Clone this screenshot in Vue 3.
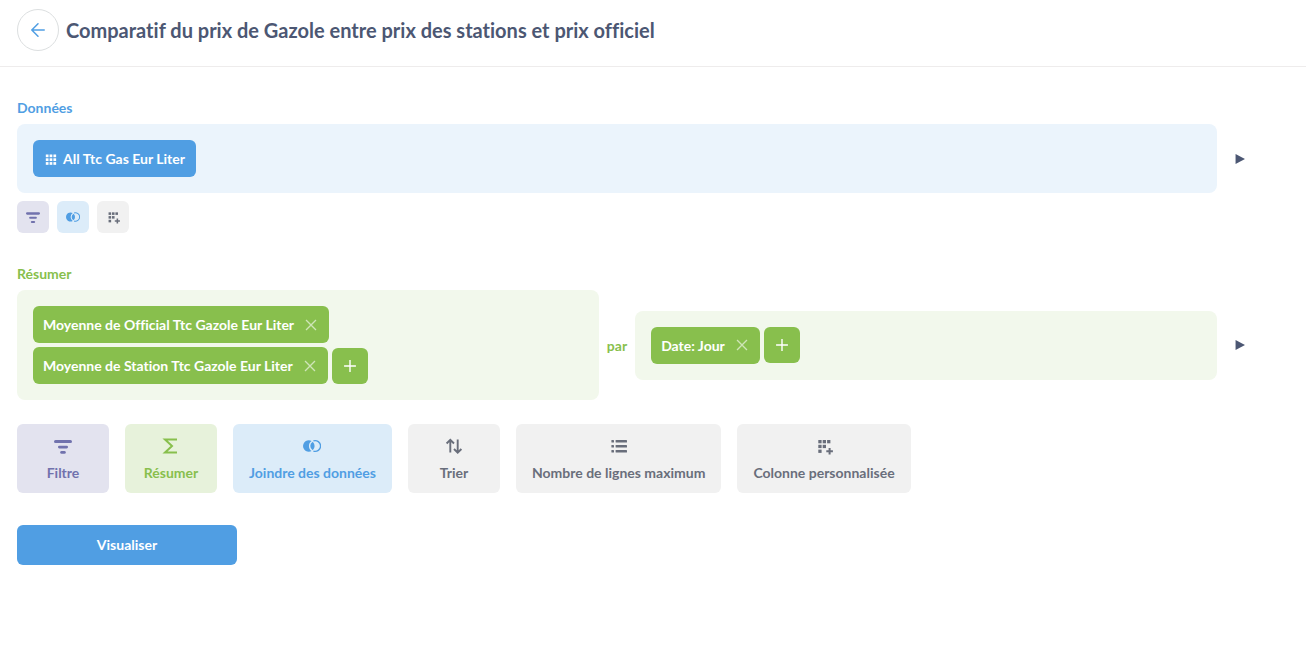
<script setup>
import { h } from 'vue'

const squares = [
  [0, 0], [1, 0], [2, 0],
  [0, 1], [1, 1], [2, 1],
  [0, 2], [1, 2], [2, 2]
]

const shapes = {
  back: () => [
    h('path', { d: 'M16 9H2M9 2L2 9l7 7', fill: 'none', stroke: 'currentColor', 'stroke-width': 1.7, 'stroke-linecap': 'round', 'stroke-linejoin': 'round' })
  ],
  table: () => squares.map(([x, y]) => h('rect', { x: 3.6 + x * 4.9, y: 3.2 + y * 4.9, width: 3.5, height: 3.5 })),
  filter: () => [
    h('rect', { x: 0, y: 3, width: 18, height: 3, rx: 1.5 }),
    h('rect', { x: 4, y: 8.7, width: 10, height: 2.7, rx: 1.3 }),
    h('rect', { x: 6.2, y: 14, width: 5.6, height: 2.8, rx: 1.4 })
  ],
  join: () => [
    h('path', { d: 'M8.600 3.900A5.800 5.800 0 1 0 8.600 14.100A6.200 6.200 0 0 1 8.600 3.900Z' }),
    h('path', { d: 'M9.750 4.750A5.800 5.800 0 0 1 9.750 13.250A4.900 4.900 0 0 1 9.750 4.750Z' }),
    h('path', { d: 'M10.400 3.900A5.400 5.400 0 1 1 10.400 14.100', fill: 'none', stroke: 'currentColor', 'stroke-width': 1.3 })
  ],
  custom: () => [
    ...squares.slice(0, 5).concat([[0, 2]]).map(([x, y]) => h('rect', { x: 3.3 + x * 4.4, y: 3 + y * 4.8, width: 3.3, height: 3.3 })),
    h('path', { d: 'M14.600 10.900v6.600M11.300 14.200h6.600', fill: 'none', stroke: 'currentColor', 'stroke-width': 2 })
  ],
  sum: () => [
    h('path', { d: 'M15 2.500H3l7 6.500-7 6.500h12', fill: 'none', stroke: 'currentColor', 'stroke-width': 2 })
  ],
  sort: () => [
    h('path', { d: 'M5.300 15.500V3M1.600 6.500l3.700-3.700L9 6.500M12.700 2.500v13M9 12l3.700 3.700 3.700-3.700', fill: 'none', stroke: 'currentColor', 'stroke-width': 1.9 })
  ],
  list: () => [3, 8, 13].flatMap((y) => [
    h('rect', { x: 1.4, y, width: 2.6, height: 2.6, rx: 0.6 }),
    h('rect', { x: 5.6, y, width: 11.4, height: 2.6, rx: 0.6 })
  ]),
  close: () => [
    h('path', { d: 'M3.400 3.400l11.200 11.200M14.600 3.400L3.400 14.600', fill: 'none', stroke: 'currentColor', 'stroke-width': 1.5 })
  ],
  plus: () => [
    h('path', { d: 'M9 1.400v15.200M1.400 9h15.200', fill: 'none', stroke: 'currentColor', 'stroke-width': 1.8 })
  ],
  play: () => [h('path', { d: 'M1 0l17 9-17 9z' })]
}

const Icon = ({ name, size }) =>
  h('svg', { width: size, height: size, viewBox: '0 0 18 18', fill: 'currentColor', 'aria-hidden': 'true' }, shapes[name]())
Icon.props = ['name', 'size']

const shortcuts = [
  { icon: 'filter', label: 'Filtre', tone: 'purple' },
  { icon: 'join', label: 'Joindre des données', tone: 'blue' },
  { icon: 'custom', label: 'Colonne personnalisée', tone: 'grey' }
]

const metrics = ['Moyenne de Official Ttc Gazole Eur Liter', 'Moyenne de Station Ttc Gazole Eur Liter']

const actions = [
  { icon: 'filter', label: 'Filtre', tone: 'purple' },
  { icon: 'sum', label: 'Résumer', tone: 'green' },
  { icon: 'join', label: 'Joindre des données', tone: 'blue' },
  { icon: 'sort', label: 'Trier', tone: 'grey' },
  { icon: 'list', label: 'Nombre de lignes maximum', tone: 'grey' },
  { icon: 'custom', label: 'Colonne personnalisée', tone: 'grey' }
]
</script>

<template>
  <div class="page">
    <header class="header">
      <button class="back" type="button" aria-label="Retour"><Icon name="back" :size="16" /></button>
      <h1 class="title">Comparatif du prix de Gazole entre prix des stations et prix officiel</h1>
    </header>

    <main class="content">
      <section class="step">
        <h2 class="step-label data-label">Données</h2>
        <div class="step-row">
          <div class="cell data-cell">
            <button class="chip data-chip" type="button"><Icon name="table" :size="14" />All Ttc Gas Eur Liter</button>
          </div>
          <button class="play" type="button" aria-label="Aperçu des données"><Icon name="play" :size="10" /></button>
        </div>
        <div class="shortcuts">
          <button v-for="s in shortcuts" :key="s.icon" class="shortcut" :class="s.tone" type="button" :aria-label="s.label">
            <Icon :name="s.icon" :size="14" />
          </button>
        </div>
      </section>

      <section class="step">
        <h2 class="step-label sum-label">Résumer</h2>
        <div class="step-row">
          <div class="summary">
            <div class="cell sum-cell metrics">
              <div v-for="m in metrics" :key="m" class="chip sum-chip">
                <span>{{ m }}</span>
                <button class="remove" type="button" :aria-label="'Supprimer ' + m"><Icon name="close" :size="16" /></button>
              </div>
              <button class="add" type="button" aria-label="Ajouter une métrique"><Icon name="plus" :size="14" /></button>
            </div>
            <span class="by">par</span>
            <div class="cell sum-cell">
              <div class="chip sum-chip">
                <span>Date: Jour</span>
                <button class="remove" type="button" aria-label="Supprimer Date: Jour"><Icon name="close" :size="16" /></button>
              </div>
              <button class="add" type="button" aria-label="Ajouter un regroupement"><Icon name="plus" :size="14" /></button>
            </div>
          </div>
          <button class="play" type="button" aria-label="Aperçu du résumé"><Icon name="play" :size="10" /></button>
        </div>
      </section>

      <div class="actions">
        <button v-for="a in actions" :key="a.label" class="action" :class="a.tone" type="button">
          <Icon :name="a.icon" :size="18" />
          <span>{{ a.label }}</span>
        </button>
      </div>

      <button class="visualize" type="button">Visualiser</button>
    </main>
  </div>
</template>

<style>
body {
  margin: 0;
  background: #fff;
}
</style>

<style scoped>
.page {
  font-family: Lato, "Liberation Sans", sans-serif;
  font-size: 14px;
  line-height: 17px;
  font-weight: 700;
  font-variant-ligatures: no-common-ligatures;
  color: #4c5773;
}
.page * {
  box-sizing: border-box;
}
button {
  border: 0;
  padding: 0;
  margin: 0;
  font: inherit;
  font-variant-ligatures: inherit;
  color: inherit;
  background: none;
  cursor: pointer;
}
svg {
  display: block;
  flex: none;
}
.header {
  display: flex;
  align-items: center;
  gap: 7px;
  padding: 9px 17px 15px;
  border-bottom: 1px solid #eeecec;
}
.back {
  width: 42px;
  height: 42px;
  display: flex;
  align-items: center;
  justify-content: center;
  flex: none;
  border: 1px solid #dcdfe0;
  border-radius: 50%;
  background: #fff;
  color: #509ee3;
}
.title {
  margin: 0;
  font-size: 20px;
  line-height: 24px;
  font-weight: 700;
}
.content {
  padding: 32px 0 32px 17px;
}
.step {
  margin-bottom: 32px;
}
.step + .step {
  margin-bottom: 24px;
}
.step-label {
  margin: 0 0 8px;
  font-size: 14px;
  line-height: 17px;
}
.data-label {
  color: #509ee3;
}
.sum-label,
.by {
  color: #88bf4d;
}
.step-row {
  display: flex;
  align-items: center;
  padding-right: 56px;
}
.cell {
  flex: 1 1 0;
  min-width: 0;
  display: flex;
  flex-wrap: wrap;
  align-items: flex-start;
  gap: 4px;
  padding: 16px;
  border-radius: 8px;
}
.metrics {
  align-items: flex-end;
}
.data-cell {
  background: #ebf4fc;
}
.sum-cell {
  background: #f2f8ec;
}
.summary {
  flex: 1;
  display: flex;
  align-items: center;
  gap: 8px;
}
.chip {
  display: flex;
  align-items: center;
  padding: 10px;
  border-radius: 6px;
  color: #fff;
}
.data-chip {
  gap: 6px;
  padding-right: 11px;
  background: #509ee3;
}
.sum-chip {
  gap: 9px;
  background: #88bf4d;
}
.remove {
  opacity: 0.6;
}
.add {
  width: 36px;
  height: 36px;
  display: flex;
  align-items: center;
  justify-content: center;
  border-radius: 6px;
  background: #88bf4d;
  color: #fff;
}
.play {
  width: 33px;
  height: 32px;
  display: flex;
  align-items: center;
  justify-content: flex-end;
  padding-right: 5px;
}
.shortcuts {
  display: flex;
  gap: 8px;
  margin-top: 8px;
}
.shortcut {
  width: 32px;
  height: 32px;
  display: flex;
  align-items: center;
  justify-content: center;
  border-radius: 6px;
}
.actions {
  display: flex;
  flex-wrap: wrap;
  gap: 16px;
}
.action {
  min-width: 92px;
  display: flex;
  flex-direction: column;
  align-items: center;
  gap: 9px;
  padding: 13px 16px 12px;
  border-radius: 6px;
}
.purple {
  background: #e3e3ef;
  color: #7172ad;
}
.green {
  background: #e7f2db;
  color: #88bf4d;
}
.blue {
  background: #dcecf9;
  color: #509ee3;
}
.grey {
  background: #f1f1f1;
  color: #696e7b;
}
.visualize {
  width: 220px;
  padding: 11px 16px 12px;
  margin-top: 32px;
  border-radius: 6px;
  background: #509ee3;
  color: #fff;
}
</style>
